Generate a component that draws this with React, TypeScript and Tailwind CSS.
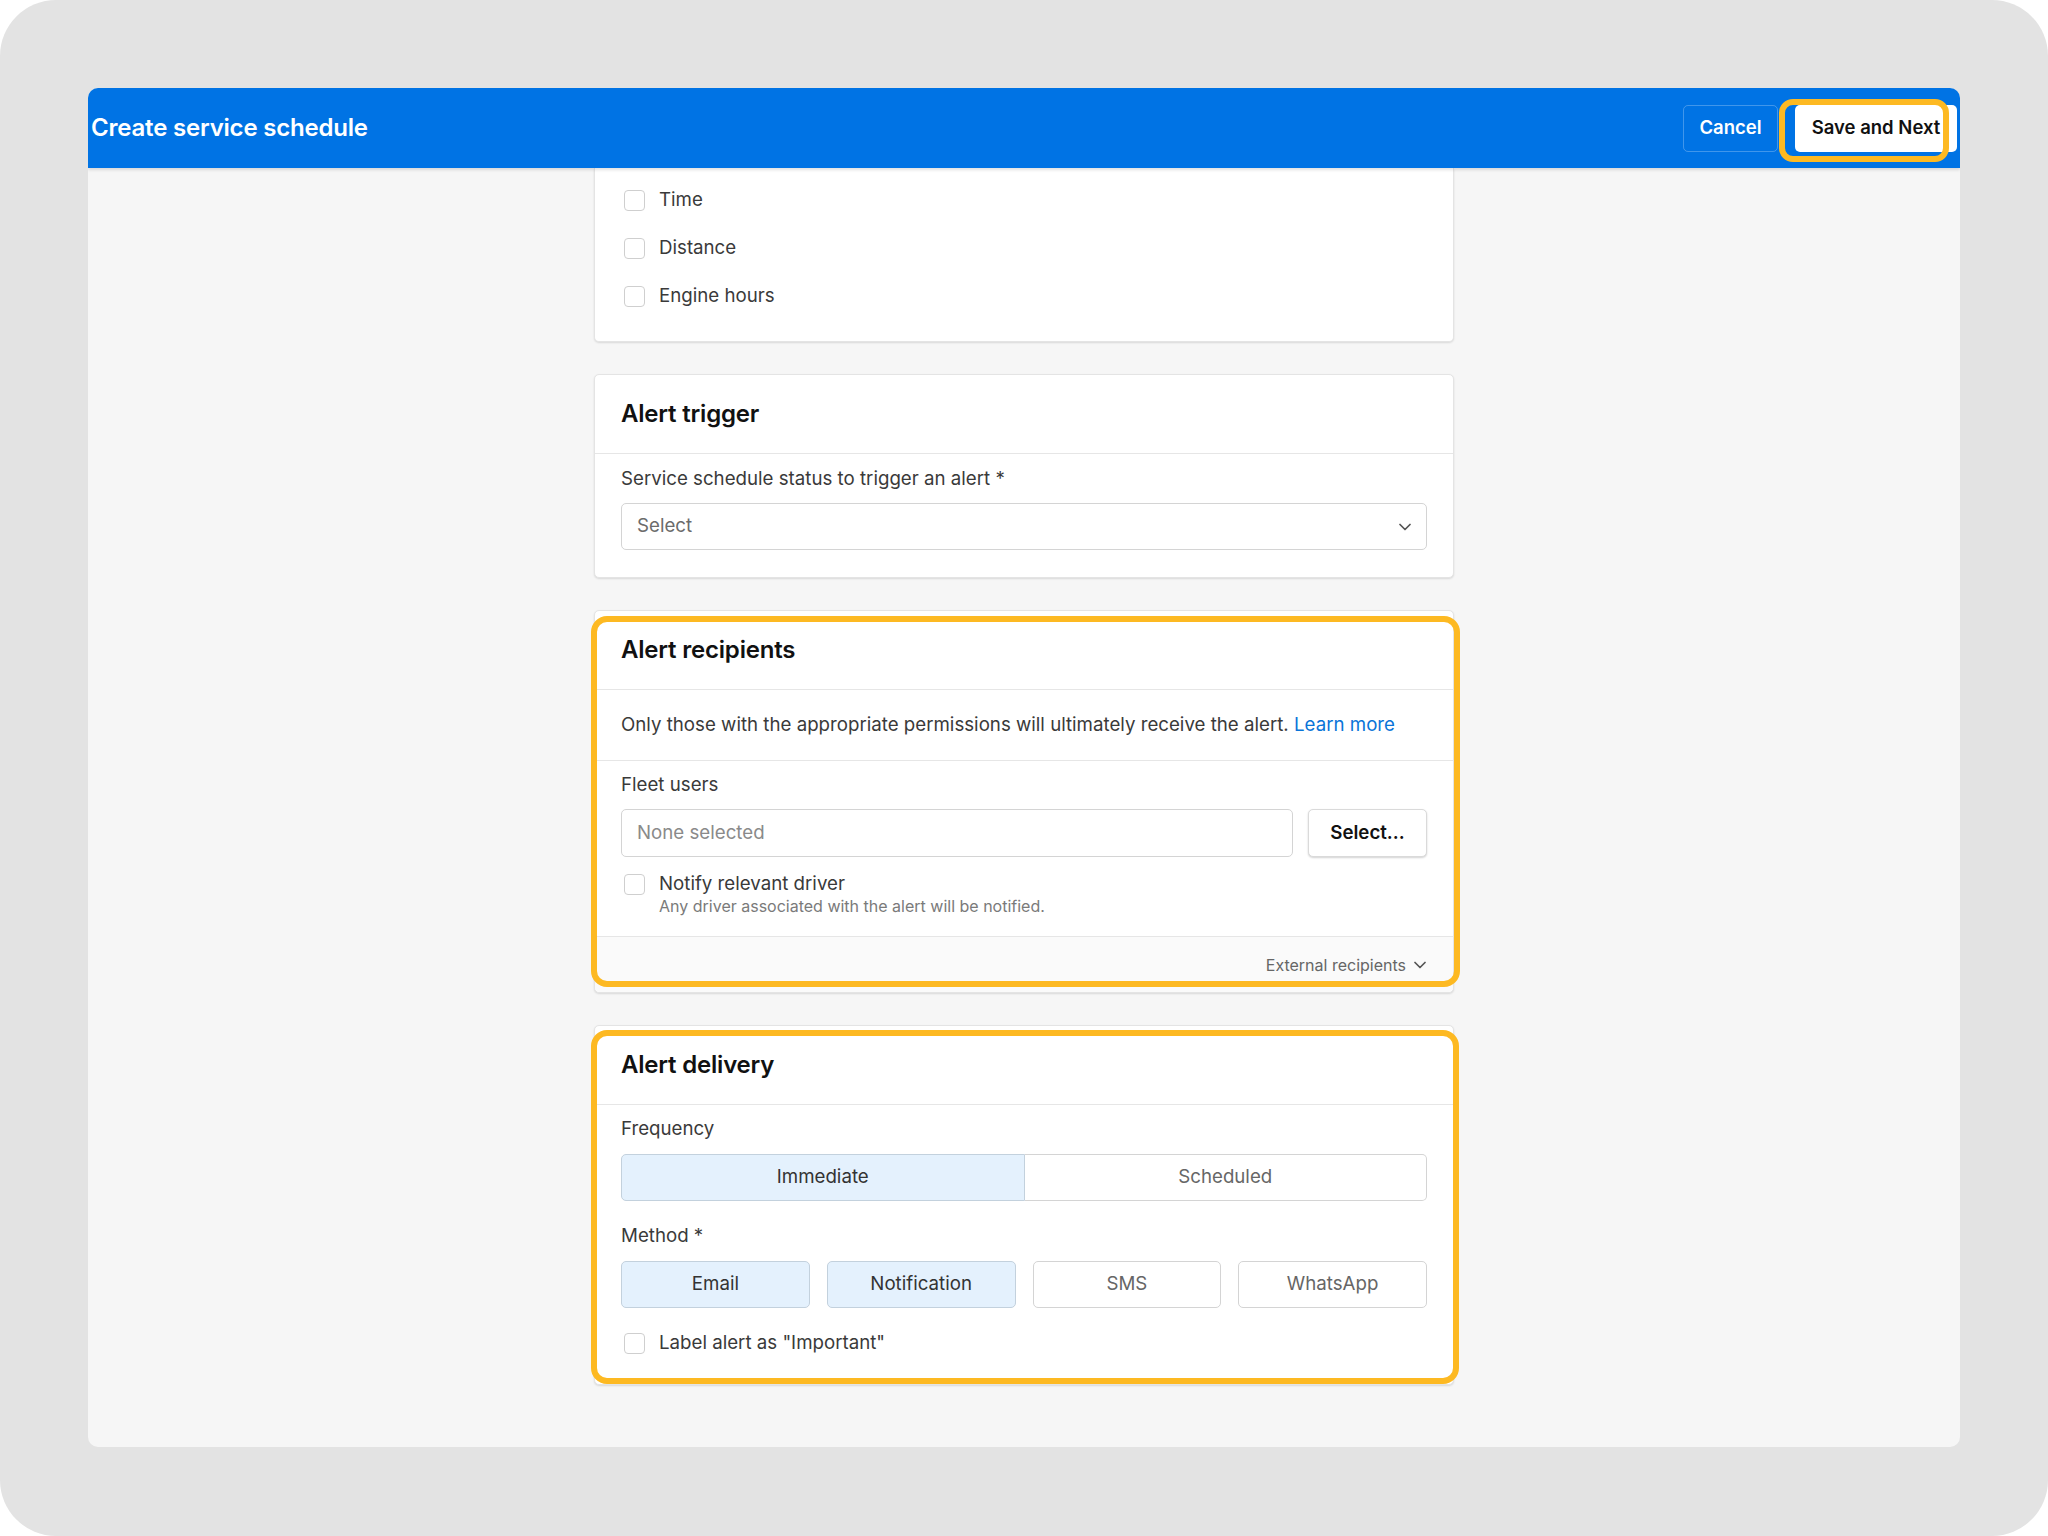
import React from 'react';

const Checkbox: React.FC<{ className?: string }> = ({ className = '' }) => (
  <span className={`block w-[21px] h-[21px] shrink-0 rounded-[4px] border border-[#cfcfcf] bg-white ${className}`} />
);

const Chevron: React.FC<{ className?: string }> = ({ className = '' }) => (
  <svg viewBox="0 0 12 8" className={className} fill="none" stroke="currentColor" strokeWidth="1.7" strokeLinecap="round" strokeLinejoin="round">
    <polyline points="1,1.5 6,6.5 11,1.5" />
  </svg>
);

const Highlight: React.FC<{ className: string }> = ({ className }) => (
  <div className={`pointer-events-none absolute border-[6px] border-[#fdb922] ${className}`} />
);

const CardHeader: React.FC<{ title: string }> = ({ title }) => (
  <div className="h-[79px] flex items-center px-[26px] border-b border-[#e6e6e6]">
    <h2 className="text-[24px] font-semibold text-[#111] tracking-[-0.2px]">{title}</h2>
  </div>
);

const Card: React.FC<{ children: React.ReactNode; className?: string }> = ({ children, className = '' }) => (
  <section className={`relative bg-white border border-[#e4e4e4] rounded-[5px] shadow-[0_1px_2px_rgba(0,0,0,0.12)] ${className}`}>
    {children}
  </section>
);

const Label: React.FC<{ children: React.ReactNode }> = ({ children }) => (
  <div className="text-[18.7px] leading-[22px] text-[#3a3a3a]">{children}</div>
);

const methods = [
  { name: 'Email', on: true },
  { name: 'Notification', on: true },
  { name: 'SMS', on: false },
  { name: 'WhatsApp', on: false },
];

const App: React.FC = () => {
  return (
    <div className="w-[2048px] h-[1536px] bg-white" style={{ fontFamily: 'Inter, "Liberation Sans", sans-serif' }}>
      <div className="w-full h-full rounded-[56px] bg-[#e3e3e3] pt-[88px] px-[88px]">
        <div className="h-[1359px] rounded-[10px] bg-[#f6f6f6] flex flex-col overflow-hidden">
          {/* header */}
          <header className="relative z-10 h-[80px] shrink-0 bg-[#0073e4] flex items-center justify-between pl-[3px] pr-[3px] shadow-[0_2px_3px_rgba(0,0,0,0.12)]">
            <h1 className="text-[24px] font-semibold text-white tracking-[-0.2px]">Create service schedule</h1>
            <div className="flex items-center gap-[17px]">
              <button className="w-[95px] h-[47px] rounded-[5px] border border-white/25 text-white text-[18.5px] font-semibold">
                Cancel
              </button>
              <div className="relative">
                <button className="w-[162px] h-[47px] rounded-[5px] bg-white text-[#111] text-[18.5px] font-semibold">
                  Save and Next
                </button>
                <Highlight className="-left-[16px] -top-[6px] w-[170px] h-[63px] rounded-[14px]" />
              </div>
            </div>
          </header>

          {/* scroll content */}
          <main className="flex-1 overflow-hidden">
            <div className="w-[860px] mx-auto flex flex-col gap-[32px]">
              {/* interval types (scrolled) */}
              <section className="bg-white border-x border-b border-[#e4e4e4] rounded-b-[5px] shadow-[0_1px_2px_rgba(0,0,0,0.12)] px-[29px] pt-[20px] pb-[33px] flex flex-col gap-[24px]">
                {['Time', 'Distance', 'Engine hours'].map((t) => (
                  <label key={t} className="flex items-center gap-[14px] h-[24px] text-[18.7px] text-[#3a3a3a]">
                    <Checkbox />
                    {t}
                  </label>
                ))}
              </section>

              {/* alert trigger */}
              <Card>
                <CardHeader title="Alert trigger" />
                <div className="px-[26px] pt-[14px] pb-[27px]">
                  <Label>Service schedule status to trigger an alert *</Label>
                  <div className="mt-[13px] h-[47px] rounded-[5px] border border-[#d4d4d4] flex items-center justify-between pl-[15px] pr-[15px]">
                    <span className="text-[18.7px] text-[#6b6b6b]">Select</span>
                    <Chevron className="w-[12px] h-[8px] text-[#555]" />
                  </div>
                </div>
              </Card>

              {/* alert recipients */}
              <Card>
                <CardHeader title="Alert recipients" />
                <div className="h-[71px] flex items-center px-[26px] border-b border-[#e6e6e6] text-[18.7px] text-[#3a3a3a]">
                  <p>
                    Only those with the appropriate permissions will ultimately receive the alert.{' '}
                    <a className="text-[#0a74d8]">Learn more</a>
                  </p>
                </div>
                <div className="px-[26px] pt-[13px] pb-[19px] border-b border-[#e6e6e6]">
                  <Label>Fleet users</Label>
                  <div className="mt-[13px] flex gap-[15px] h-[48px]">
                    <div className="flex-1 rounded-[5px] border border-[#d4d4d4] flex items-center pl-[15px] text-[18.7px] text-[#8a8a8a]">
                      None selected
                    </div>
                    <button className="w-[119px] rounded-[5px] border border-[#dadada] bg-white shadow-[0_1px_2px_rgba(0,0,0,0.18)] text-[18.7px] font-semibold text-[#111]">
                      Select...
                    </button>
                  </div>
                  <div className="mt-[15px] flex items-start gap-[14px] pl-[3px]">
                    <Checkbox className="mt-[2px]" />
                    <div>
                      <div className="text-[18.7px] leading-[24px] text-[#3a3a3a]">Notify relevant driver</div>
                      <div className="text-[16px] leading-[21px] text-[#7a7a7a]">Any driver associated with the alert will be notified.</div>
                    </div>
                  </div>
                </div>
                <div className="h-[55px] bg-[#fafafa] rounded-b-[5px] flex items-center justify-end gap-[8px] px-[27px] text-[16px] text-[#666]">
                  External recipients
                  <Chevron className="w-[12px] h-[8px] text-[#555]" />
                </div>
                <Highlight className="-left-[4px] -right-[7px] top-[5px] bottom-[5px] rounded-[16px]" />
              </Card>

              {/* alert delivery */}
              <Card>
                <CardHeader title="Alert delivery" />
                <div className="px-[26px] pt-[13px] pb-[29px]">
                  <Label>Frequency</Label>
                  <div className="mt-[14px] flex h-[47px] text-[18.7px]">
                    <div className="flex-1 flex items-center justify-center rounded-l-[5px] border border-[#c3d1dd] bg-[#e4f1fd] text-[#333]">
                      Immediate
                    </div>
                    <div className="flex-1 flex items-center justify-center rounded-r-[5px] border border-l-0 border-[#d4d4d4] bg-white text-[#666]">
                      Scheduled
                    </div>
                  </div>
                  <div className="mt-[24px]">
                    <Label>Method *</Label>
                  </div>
                  <div className="mt-[14px] grid grid-cols-4 gap-[17px] h-[47px] text-[18.7px]">
                    {methods.map((m) => (
                      <div
                        key={m.name}
                        className={
                          m.on
                            ? 'flex items-center justify-center rounded-[5px] border border-[#c3d1dd] bg-[#e4f1fd] text-[#333]'
                            : 'flex items-center justify-center rounded-[5px] border border-[#d4d4d4] bg-white text-[#666]'
                        }
                      >
                        {m.name}
                      </div>
                    ))}
                  </div>
                  <label className="mt-[23px] flex items-center gap-[14px] h-[24px] pl-[3px] text-[18.7px] text-[#3a3a3a]">
                    <Checkbox />
                    Label alert as "Important"
                  </label>
                </div>
                <Highlight className="-left-[4px] -right-[6px] top-[4px] bottom-0 rounded-[16px]" />
              </Card>
            </div>
          </main>
        </div>
      </div>
    </div>
  );
};

export default App;
